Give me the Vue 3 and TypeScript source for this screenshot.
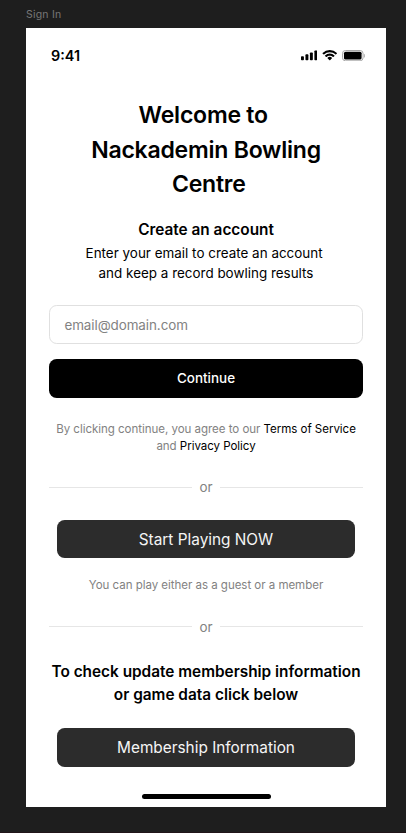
<script setup lang="ts">
import { ref } from 'vue'

const email = ref<string>('')
const signalBars: number[] = [4, 6, 8, 10]
</script>

<template>
  <div class="canvas">
    <div class="frame-label">Sign In</div>
    <main class="screen">
      <header class="status">
        <span class="time">9:41</span>
        <div class="indicators">
          <svg class="signal" viewBox="0 0 17 11" aria-hidden="true">
            <rect v-for="(h, i) in signalBars" :key="h" :x="i * 4.6" :y="10.5 - h" width="3" :height="h" rx="0.8" />
          </svg>
          <svg class="wifi" viewBox="0 0 17 12" aria-hidden="true">
            <path d="M8.5 2.4c2.4 0 4.6.9 6.3 2.5.1.1.3.1.4 0l1.2-1.2c.1-.1.1-.4 0-.5a11.5 11.5 0 0 0-15.8 0c-.1.1-.1.4 0 .5l1.2 1.2c.1.1.3.1.4 0a9.2 9.2 0 0 1 6.3-2.5zM8.5 6.3c1.3 0 2.6.5 3.5 1.4.1.1.3.1.5 0l1.2-1.2c.1-.1.1-.4 0-.5a7.6 7.6 0 0 0-10.4 0c-.1.1-.1.4 0 .5l1.2 1.2c.1.1.3.1.5 0 .9-.9 2.2-1.4 3.5-1.4zM10.9 9c.1-.1.1-.4 0-.5a3.7 3.7 0 0 0-4.8 0c-.1.1-.1.4 0 .5l2.1 2.1c.2.1.4.1.6 0z" />
          </svg>
          <svg class="battery" viewBox="0 0 24 12" aria-hidden="true">
            <rect x="0.5" y="0.5" width="21" height="10.5" rx="3" fill="none" stroke="#a6a6a6" />
            <rect x="2" y="1.8" width="18" height="8" rx="1.6" />
            <path d="M22.7 4v3.7c.7-.3 1.1-1 1.1-1.85s-.4-1.55-1.1-1.85z" fill="#a6a6a6" />
          </svg>
        </div>
      </header>

      <h1 class="title">
        <span>Welcome to&nbsp;</span>
        <span>Nackademin Bowling</span>
        <span>&nbsp;Centre</span>
      </h1>

      <section class="intro">
        <h2>Create an account</h2>
        <p><span>Enter your email to create an account&nbsp;</span><span>and keep a record bowling results</span></p>
      </section>

      <form class="signup" @submit.prevent>
        <input v-model="email" type="email" placeholder="email@domain.com" aria-label="Email" />
        <button type="submit" class="continue">Continue</button>
      </form>

      <p class="legal">By clicking continue, you agree to our <a>Terms of Service</a><br />and <a>Privacy Policy</a></p>

      <div class="divider"><span>or</span></div>
      <button type="button" class="action play">Start Playing NOW</button>
      <p class="hint">You can play either as a guest or a member</p>
      <div class="divider second"><span>or</span></div>

      <h2 class="membership">To check update membership information<br />or game data click below</h2>
      <button type="button" class="action member">Membership Information</button>
      <div class="home-bar"></div>
    </main>
  </div>
</template>

<style>
body {
  background: #1e1e1e;
}
</style>

<style scoped>
.canvas {
  box-sizing: border-box;
  height: 833px;
  padding: 0 20px 0 26px;
  overflow: hidden;
  background: #1e1e1e;
  border-bottom: 1px solid #211519;
  font-family: Inter, sans-serif;
}
.frame-label {
  height: 28px;
  line-height: 29px;
  font-size: 10.5px;
  letter-spacing: 0.02em;
  color: #777;
}
.screen {
  box-sizing: border-box;
  display: flex;
  flex-direction: column;
  align-items: center;
  width: 360px;
  height: 779px;
  padding: 0 23px;
  background: #fff;
  color: #000;
}
.status {
  box-sizing: border-box;
  display: flex;
  justify-content: space-between;
  align-items: center;
  flex: none;
  width: 100%;
  height: 55px;
  padding-left: 2px;
}
.time {
  font-size: 14.4px;
  font-weight: 600;
}
.indicators {
  display: flex;
  align-items: center;
  gap: 4.5px;
  margin-right: -2px;
}
.signal {
  width: 16.5px;
  height: 10.7px;
}
.wifi {
  width: 15.5px;
  height: 11px;
}
.battery {
  width: 23.5px;
  height: 11.8px;
}
h1,
h2,
p {
  margin: 0;
  text-align: center;
}
.title {
  margin-top: 15px;
  font-size: 23.04px;
  font-weight: 600;
  line-height: 34.56px;
  letter-spacing: -0.01em;
}
.title span,
.intro span {
  display: block;
  white-space: nowrap;
}
h2 {
  font-size: 15.36px;
  font-weight: 600;
  line-height: 23.04px;
  white-space: nowrap;
}
.intro {
  margin-top: 16px;
}
.intro p {
  margin-top: 2px;
  font-size: 13.44px;
  line-height: 20.16px;
}
.signup {
  display: flex;
  flex-direction: column;
  gap: 15.4px;
  width: 100%;
  margin-top: 22.4px;
}
input {
  box-sizing: border-box;
  width: 100%;
  height: 38.4px;
  padding: 0 14.4px;
  border: 1px solid #e0e0e0;
  border-radius: 7.7px;
  outline: none;
  background: #fff;
  font: 400 13.44px Inter, sans-serif;
  letter-spacing: -0.08px;
}
input::placeholder {
  color: #828282;
  opacity: 1;
}
button {
  flex: none;
  padding: 0;
  border: 0;
  height: 38.4px;
  border-radius: 7.7px;
  background: #000;
  color: #fff;
  font: 500 13.44px Inter, sans-serif;
}
.legal,
.hint {
  font-size: 11.52px;
  line-height: 17.28px;
  letter-spacing: -0.03px;
  color: #828282;
  white-space: nowrap;
}
.legal {
  margin-top: 23.3px;
}
.legal a {
  color: #000;
}
.divider {
  display: flex;
  align-items: center;
  gap: 7.7px;
  width: 100%;
  height: 20px;
  margin-top: 22px;
  color: #828282;
  font-size: 13.44px;
}
.divider::before,
.divider::after {
  content: '';
  flex: 1;
  height: 1px;
  background: #e6e6e6;
}
.action {
  width: 298.5px;
  background: #2c2c2c;
  color: #f5f5f5;
  font-size: 15.36px;
  font-weight: 400;
}
.play {
  margin-top: 22.6px;
}
.hint {
  margin-top: 18.8px;
}
.second {
  margin-top: 22px;
}
.membership {
  margin-top: 23.4px;
}
.member {
  margin-top: 22.4px;
}
.home-bar {
  flex: none;
  width: 129px;
  height: 5px;
  margin-top: 27.6px;
  border-radius: 3px;
  background: #000;
}
</style>
